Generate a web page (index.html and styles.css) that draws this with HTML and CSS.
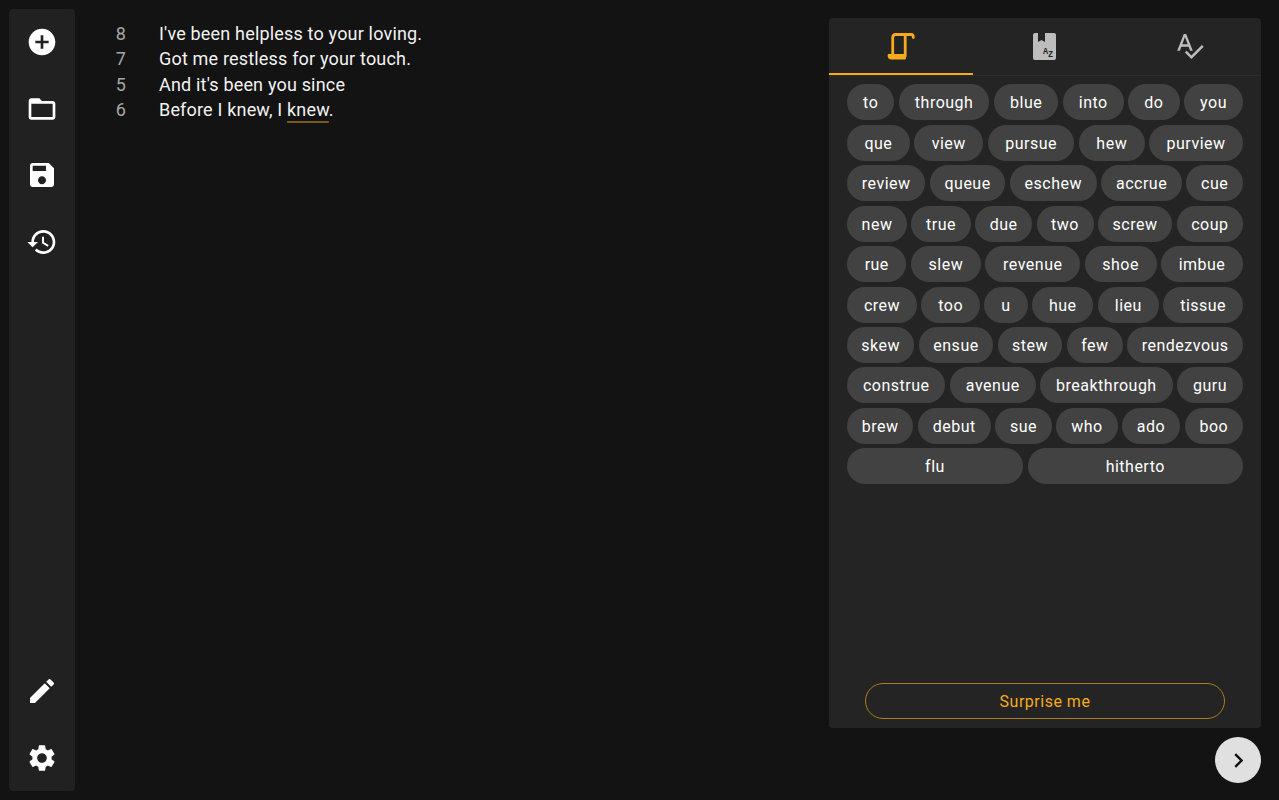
FILE: index.html
```html
<!DOCTYPE html>
<html lang="en">
<head>
    <meta charset="UTF-8">
    <meta name="viewport" content="width=device-width, initial-scale=1.0">
    <title>Lyrics</title>
    <link rel="stylesheet" href="styles.css">
</head>
<body>
    <nav class="sidebar">
        <div class="nav-group">
            <div class="nav-item"><svg viewBox="0 0 24 24"><path d="M12 2C6.48 2 2 6.48 2 12s4.48 10 10 10 10-4.48 10-10S17.52 2 12 2zm5 11h-4v4h-2v-4H7v-2h4V7h2v4h4v2z"/></svg></div>
            <div class="nav-item"><svg viewBox="0 0 24 24"><path d="M20 6h-8l-2-2H4c-1.1 0-1.99.9-1.99 2L2 18c0 1.1.9 2 2 2h16c1.1 0 2-.9 2-2V8c0-1.1-.9-2-2-2zm0 12H4V8h16v10z"/></svg></div>
            <div class="nav-item"><svg viewBox="0 0 24 24"><path d="M17 3H5c-1.11 0-2 .9-2 2v14c0 1.1.89 2 2 2h14c1.1 0 2-.9 2-2V7l-4-4zm-5 16c-1.66 0-3-1.34-3-3s1.34-3 3-3 3 1.34 3 3-1.34 3-3 3zm3-10H5V5h10v4z"/></svg></div>
            <div class="nav-item"><svg viewBox="0 0 24 24"><path d="M13 3c-4.97 0-9 4.03-9 9H1l3.89 3.89.07.14L9 12H6c0-3.87 3.13-7 7-7s7 3.13 7 7-3.13 7-7 7c-1.93 0-3.68-.79-4.94-2.06l-1.42 1.42C8.27 19.99 10.51 21 13 21c4.97 0 9-4.03 9-9s-4.03-9-9-9zm-1 5v5l4.28 2.54.72-1.21-3.5-2.08V8H12z"/></svg></div>
        </div>
        <div class="nav-group">
            <div class="nav-item"><svg viewBox="0 0 24 24"><path d="M3 17.25V21h3.75L17.81 9.94l-3.75-3.75L3 17.25zM20.71 7.04c.39-.39.39-1.02 0-1.41l-2.34-2.34c-.39-.39-1.02-.39-1.41 0l-1.83 1.83 3.75 3.75 1.83-1.83z"/></svg></div>
            <div class="nav-item"><svg viewBox="0 0 24 24"><path d="M19.14 12.94c.04-.3.06-.61.06-.94 0-.32-.02-.64-.07-.94l2.03-1.58c.18-.14.23-.41.12-.61l-1.92-3.32c-.12-.22-.37-.29-.59-.22l-2.39.96c-.5-.38-1.03-.7-1.62-.94l-.36-2.54c-.04-.24-.24-.41-.48-.41h-3.84c-.24 0-.43.17-.47.41l-.36 2.54c-.59.24-1.13.57-1.62.94l-2.39-.96c-.22-.08-.47 0-.59.22L2.74 8.87c-.12.21-.08.47.12.61l2.03 1.58c-.05.3-.09.63-.09.94s.02.64.07.94l-2.03 1.58c-.18.14-.23.41-.12.61l1.92 3.32c.12.22.37.29.59.22l2.39-.96c.5.38 1.03.7 1.62.94l.36 2.54c.05.24.24.41.48.41h3.84c.24 0 .44-.17.47-.41l.36-2.54c.59-.24 1.13-.56 1.62-.94l2.39.96c.22.08.47 0 .59-.22l1.92-3.32c.12-.22.07-.47-.12-.61l-2.01-1.58zM12 15.6c-1.98 0-3.6-1.62-3.6-3.6s1.62-3.6 3.6-3.6 3.6 1.62 3.6 3.6-1.62 3.6-3.6 3.6z"/></svg></div>
        </div>
    </nav>

    <main class="editor">
        <div class="line"><span class="syllables">8</span><span>I've been helpless to your loving.</span></div>
        <div class="line"><span class="syllables">7</span><span>Got me restless for your touch.</span></div>
        <div class="line"><span class="syllables">5</span><span>And it's been you since</span></div>
        <div class="line"><span class="syllables">6</span><span>Before I knew, I <span class="selected">knew</span>.</span></div>
    </main>

    <div class="right-column">
        <section class="panel">
            <div class="tabs">
                <div class="tab active">
                    <svg class="tab-icon" viewBox="0 0 28 28" fill="none" stroke="#f5ab1c" stroke-width="2.8" stroke-linecap="round">
                        <path d="M5.7 22V5.5Q5.7 2.5 8.7 2.5H24.5Q26.3 2.5 26.3 5.5"/>
                        <path d="M18.2 3V24"/>
                        <path d="M1.6 23H18V26.6H4.5Q1.6 26.6 1.6 23Z" fill="#f5ab1c" stroke-width="2" stroke-linejoin="round"/>
                    </svg>
                </div>
                <div class="tab">
                    <svg class="tab-icon" viewBox="0 0 28 28">
                        <path d="M4 1H7V10L10.5 8 14 10V1H23Q25 1 25 3V26Q25 28 23 28H4Q2 28 2 26V3Q2 1 4 1Z" fill="#bdbdbd"/>
                        <text class="dict-letter" x="12" y="22">A</text>
                        <text class="dict-letter" x="17" y="25">Z</text>
                    </svg>
                </div>
                <div class="tab">
                    <svg class="tab-icon spell" viewBox="0 0 24 24" fill="#bdbdbd"><path d="M12.45 16h2.09L9.43 3H7.57L2.46 16h2.09l1.12-3h5.64l1.14 3zm-6.02-5L8.5 5.48 10.57 11H6.43zm15.16.59l-8.09 8.09L9.83 16l-1.41 1.41 5.09 5.09L23 13l-1.41-1.41z"/></svg>
                </div>
            </div>
            <div class="chips">
                <span class="chip">to</span><span class="chip">through</span><span class="chip">blue</span><span class="chip">into</span><span class="chip">do</span><span class="chip">you</span>
                <span class="chip">que</span><span class="chip">view</span><span class="chip">pursue</span><span class="chip">hew</span><span class="chip">purview</span>
                <span class="chip">review</span><span class="chip">queue</span><span class="chip">eschew</span><span class="chip">accrue</span><span class="chip">cue</span>
                <span class="chip">new</span><span class="chip">true</span><span class="chip">due</span><span class="chip">two</span><span class="chip">screw</span><span class="chip">coup</span>
                <span class="chip">rue</span><span class="chip">slew</span><span class="chip">revenue</span><span class="chip">shoe</span><span class="chip">imbue</span>
                <span class="chip">crew</span><span class="chip">too</span><span class="chip">u</span><span class="chip">hue</span><span class="chip">lieu</span><span class="chip">tissue</span>
                <span class="chip">skew</span><span class="chip">ensue</span><span class="chip">stew</span><span class="chip">few</span><span class="chip">rendezvous</span>
                <span class="chip">construe</span><span class="chip">avenue</span><span class="chip">breakthrough</span><span class="chip">guru</span>
                <span class="chip">brew</span><span class="chip">debut</span><span class="chip">sue</span><span class="chip">who</span><span class="chip">ado</span><span class="chip">boo</span>
                <span class="chip">flu</span><span class="chip">hitherto</span>
            </div>
            <button class="surprise">Surprise me</button>
        </section>
        <button class="fab">
            <svg viewBox="0 0 24 24"><path d="M10 6L8.59 7.41 13.17 12l-4.58 4.59L10 18l6-6z"/></svg>
        </button>
    </div>
</body>
</html>
```

FILE: styles.css
```css
body {
    font-family: Roboto, sans-serif;
    background-color: #131313;
    color: #f2f2f2;
    margin: 0;
    height: 800px;
    overflow: hidden;
    display: flex;
}
.sidebar {
    width: 66px;
    margin: 9px 0;
    background: #212121;
    border-radius: 4px;
    margin-left: 9px;
    display: flex;
    flex-direction: column;
    justify-content: space-between;
}
.nav-item {
    height: 66.6px;
    display: flex;
    align-items: center;
    justify-content: center;
}
.nav-item svg {
    width: 32px;
    height: 32px;
    fill: #ffffff;
}
.editor {
    flex: 1;
    padding: 21px 0 0 34px;
    font-size: 18px;
    line-height: 25.3px;
    letter-spacing: 0.18px;
}
.line {
    display: flex;
    gap: 26px;
}
.syllables {
    width: 24px;
    text-align: center;
    color: #a6a6a6;
}
.selected {
    text-decoration: underline;
    text-decoration-color: #7a5a14;
    text-decoration-thickness: 2px;
    text-underline-offset: 5px;
}
.right-column {
    width: 432px;
    margin: 18px 18px 0 0;
    display: flex;
    flex-direction: column;
    align-items: flex-end;
}
.panel {
    width: 100%;
    height: 710px;
    background: #242424;
    border-radius: 4px;
    display: flex;
    flex-direction: column;
    align-items: center;
}
.tabs {
    width: 100%;
    display: flex;
    height: 57px;
    border-bottom: 1px solid #2c2c2c;
}
.tab {
    flex: 1;
    display: flex;
    align-items: center;
    justify-content: center;
    padding-bottom: 2px;
    box-sizing: border-box;
    height: 57px;
}
.tab.active {
    border-bottom: 2px solid #f5ab1c;
    padding-bottom: 0;
}
.tab-icon {
    width: 28px;
    height: 28px;
}
.tab-icon.spell {
    width: 31px;
    height: 31px;
}
.dict-letter {
    font-family: "Liberation Mono", monospace;
    font-size: 8.5px;
    font-weight: 700;
    fill: #242424;
}
.chips {
    flex: 1;
    width: 396px;
    padding-top: 8.3px;
    display: flex;
    flex-wrap: wrap;
    gap: 4.46px 4.5px;
    align-content: flex-start;
}
.chip {
    flex-grow: 1;
    height: 36px;
    line-height: 37px;
    padding: 0 14px;
    background: #424242;
    border-radius: 18px;
    font-size: 16px;
    letter-spacing: 0.5px;
    text-align: center;
    color: #ffffff;
}
.surprise {
    width: 360px;
    height: 36px;
    margin-bottom: 9px;
    background: transparent;
    border: 1px solid #ad7e1c;
    border-radius: 18px;
    color: #f5ab1c;
    font-family: Roboto, sans-serif;
    font-size: 16px;
    letter-spacing: 0.5px;
}
.fab {
    width: 46px;
    height: 46px;
    margin-top: 9px;
    padding: 0;
    border: none;
    border-radius: 50%;
    background: #e0e0e0;
    display: flex;
    align-items: center;
    justify-content: center;
}
.fab svg {
    width: 29px;
    height: 29px;
    fill: #111111;
}
```
